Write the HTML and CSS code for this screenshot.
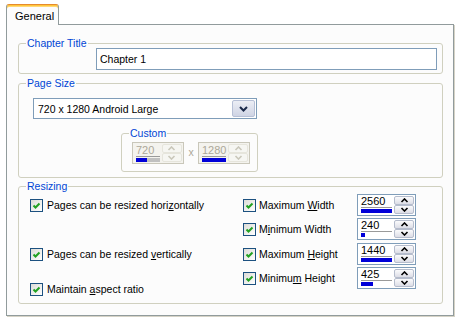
FILE: index.html
```html
<!DOCTYPE html>
<html>
<head>
<meta charset="utf-8">
<link rel="stylesheet" href="styles.css">
</head>
<body>
<div class="tabstrip"><div class="tab">General</div></div>
<div class="panel">
  <div class="group g-title">
    <div class="legend">Chapter Title</div>
    <div class="textbox">Chapter 1</div>
  </div>

  <div class="group g-size">
    <div class="legend">Page Size</div>
    <div class="combo">
      <span class="combo-text">720 x 1280 Android Large</span>
      <span class="combo-btn"><svg width="9" height="6" viewBox="0 0 9 6"><polyline points="1,1 4.5,4.5 8,1" fill="none" stroke="#1b2a4a" stroke-width="2"/></svg></span>
    </div>
    <div class="group g-custom">
      <div class="legend">Custom</div>
      <div class="spin small disabled">
        <div class="spin-edit"><span class="spin-num">720</span><span class="spin-bar"><span class="fill" style="width:46%"></span></span></div>
        <div class="spin-btns">
          <span class="sb"><svg width="9" height="5" viewBox="0 0 9 5"><polyline points="1.5,4 4.5,1 7.5,4" fill="none" stroke="currentColor" stroke-width="1.6"/></svg></span>
          <span class="sb"><svg width="9" height="5" viewBox="0 0 9 5"><polyline points="1.5,1 4.5,4 7.5,1" fill="none" stroke="currentColor" stroke-width="1.6"/></svg></span>
        </div>
      </div>
      <span class="times">x</span>
      <div class="spin small disabled">
        <div class="spin-edit"><span class="spin-num">1280</span><span class="spin-bar"><span class="fill" style="width:100%"></span></span></div>
        <div class="spin-btns">
          <span class="sb"><svg width="9" height="5" viewBox="0 0 9 5"><polyline points="1.5,4 4.5,1 7.5,4" fill="none" stroke="currentColor" stroke-width="1.6"/></svg></span>
          <span class="sb"><svg width="9" height="5" viewBox="0 0 9 5"><polyline points="1.5,1 4.5,4 7.5,1" fill="none" stroke="currentColor" stroke-width="1.6"/></svg></span>
        </div>
      </div>
    </div>
  </div>

  <div class="group g-resize">
    <div class="legend">Resizing</div>
    <div class="col-left">
      <label class="check l1"><span class="box"><svg width="11" height="11" viewBox="0 0 11 11"><polyline points="2.5,5.5 4.5,7.5 8.5,3.5" fill="none" stroke="#21a121" stroke-width="2"/></svg></span><span class="lbl">Pages can be resized hori<u>z</u>ontally</span></label>
      <label class="check l2"><span class="box"><svg width="11" height="11" viewBox="0 0 11 11"><polyline points="2.5,5.5 4.5,7.5 8.5,3.5" fill="none" stroke="#21a121" stroke-width="2"/></svg></span><span class="lbl">Pages can be resized <u>v</u>ertically</span></label>
      <label class="check l3"><span class="box"><svg width="11" height="11" viewBox="0 0 11 11"><polyline points="2.5,5.5 4.5,7.5 8.5,3.5" fill="none" stroke="#21a121" stroke-width="2"/></svg></span><span class="lbl">Maintain <u>a</u>spect ratio</span></label>
    </div>
    <div class="col-right">
      <div class="row">
        <label class="check wide"><span class="box"><svg width="11" height="11" viewBox="0 0 11 11"><polyline points="2.5,5.5 4.5,7.5 8.5,3.5" fill="none" stroke="#21a121" stroke-width="2"/></svg></span><span class="lbl">Maximum <u>W</u>idth</span></label>
        <div class="spin">
          <div class="spin-edit"><span class="spin-num">2560</span><span class="spin-bar"><span class="fill" style="width:100%"></span></span></div>
          <div class="spin-btns">
            <span class="sb"><svg width="9" height="5" viewBox="0 0 9 5"><polyline points="1.5,4 4.5,1 7.5,4" fill="none" stroke="currentColor" stroke-width="1.6"/></svg></span>
            <span class="sb"><svg width="9" height="5" viewBox="0 0 9 5"><polyline points="1.5,1 4.5,4 7.5,1" fill="none" stroke="currentColor" stroke-width="1.6"/></svg></span>
          </div>
        </div>
      </div>
      <div class="row">
        <label class="check wide"><span class="box"><svg width="11" height="11" viewBox="0 0 11 11"><polyline points="2.5,5.5 4.5,7.5 8.5,3.5" fill="none" stroke="#21a121" stroke-width="2"/></svg></span><span class="lbl">M<u>i</u>nimum Width</span></label>
        <div class="spin">
          <div class="spin-edit"><span class="spin-num">240</span><span class="spin-bar"><span class="fill" style="width:14%"></span></span></div>
          <div class="spin-btns">
            <span class="sb"><svg width="9" height="5" viewBox="0 0 9 5"><polyline points="1.5,4 4.5,1 7.5,4" fill="none" stroke="currentColor" stroke-width="1.6"/></svg></span>
            <span class="sb"><svg width="9" height="5" viewBox="0 0 9 5"><polyline points="1.5,1 4.5,4 7.5,1" fill="none" stroke="currentColor" stroke-width="1.6"/></svg></span>
          </div>
        </div>
      </div>
      <div class="row r3">
        <label class="check wide"><span class="box"><svg width="11" height="11" viewBox="0 0 11 11"><polyline points="2.5,5.5 4.5,7.5 8.5,3.5" fill="none" stroke="#21a121" stroke-width="2"/></svg></span><span class="lbl">Maximum <u>H</u>eight</span></label>
        <div class="spin">
          <div class="spin-edit"><span class="spin-num">1440</span><span class="spin-bar"><span class="fill" style="width:100%"></span></span></div>
          <div class="spin-btns">
            <span class="sb"><svg width="9" height="5" viewBox="0 0 9 5"><polyline points="1.5,4 4.5,1 7.5,4" fill="none" stroke="currentColor" stroke-width="1.6"/></svg></span>
            <span class="sb"><svg width="9" height="5" viewBox="0 0 9 5"><polyline points="1.5,1 4.5,4 7.5,1" fill="none" stroke="currentColor" stroke-width="1.6"/></svg></span>
          </div>
        </div>
      </div>
      <div class="row r4">
        <label class="check wide"><span class="box"><svg width="11" height="11" viewBox="0 0 11 11"><polyline points="2.5,5.5 4.5,7.5 8.5,3.5" fill="none" stroke="#21a121" stroke-width="2"/></svg></span><span class="lbl">Minimu<u>m</u> Height</span></label>
        <div class="spin">
          <div class="spin-edit"><span class="spin-num">425</span><span class="spin-bar"><span class="fill" style="width:37%"></span></span></div>
          <div class="spin-btns">
            <span class="sb"><svg width="9" height="5" viewBox="0 0 9 5"><polyline points="1.5,4 4.5,1 7.5,4" fill="none" stroke="currentColor" stroke-width="1.6"/></svg></span>
            <span class="sb"><svg width="9" height="5" viewBox="0 0 9 5"><polyline points="1.5,1 4.5,4 7.5,1" fill="none" stroke="currentColor" stroke-width="1.6"/></svg></span>
          </div>
        </div>
      </div>
    </div>
  </div>
</div>
</body>
</html>
```

FILE: styles.css
```css
* { box-sizing: border-box; }
html, body {
  margin: 0;
  padding: 0;
  background: #ffffff;
}
body {
  width: 459px;
  height: 321px;
  overflow: hidden;
  font-family: "Liberation Sans", Arial, sans-serif;
  font-size: 10.5px;
  color: #000;
}

/* tab */
.tabstrip {
  height: 25px;
  padding: 4px 0 0 6px;
  display: flex;
}
.tab {
  position: relative;
  z-index: 1;
  width: 53px;
  height: 21px;
  background: #fcfcfc;
  border: 1px solid #919b9c;
  border-top: 1px solid #e68b2c;
  border-bottom: none;
  border-radius: 3px 3px 0 0;
  box-shadow: inset 0 1px 0 #ffc73c, inset 0 2px 0 #ffd878;
  padding: 2px 0 0 8px;
  display: flex;
  align-items: center;
  font-size: 11px;
}

/* panel */
.panel {
  margin: -1px 0 0 6px;
  width: 448px;
  height: 292px;
  border: 1px solid #919b9c;
  background: #fcfcfc;
  box-shadow: 1px 1px 0 #d6d3c6;
  padding: 18px 10px 0 11px;
}

/* group boxes */
.group {
  position: relative;
  border: 1px solid #d0d0bf;
  border-radius: 3px;
}
.legend {
  position: absolute;
  top: -7px;
  left: 7px;
  padding: 0 1px;
  line-height: 13px;
  background: #fcfcfc;
  color: #0046d5;
}

.g-title {
  height: 31px;
  padding: 4px 5px 0 77px;
}
.textbox {
  height: 22px;
  border: 1px solid #7f9db9;
  background: #fff;
  padding-left: 3px;
  line-height: 20px;
}

.g-size {
  margin-top: 9px;
  height: 95px;
  padding: 14px 0 0 14px;
}
.combo {
  width: 224px;
  height: 21px;
  border: 1px solid #7f9db9;
  background: #fff;
  display: flex;
  align-items: center;
  padding: 0 1px 0 4px;
}
.combo-text { flex: 1; }
.combo-btn {
  width: 23px;
  height: 17px;
  border: 1px solid #b7c0d6;
  border-radius: 2px;
  background: linear-gradient(#eceef5, #cfd4e4);
  display: flex;
  align-items: center;
  justify-content: center;
}

.g-custom {
  margin: 14px 0 0 88px;
  width: 137px;
  height: 39px;
  padding: 8px 0 0 10px;
  display: flex;
}
.times {
  width: 14px;
  text-align: center;
  line-height: 20px;
  color: #aca899;
}

/* spinners */
.spin {
  width: 59px;
  height: 22px;
  border: 1px solid #7f9db9;
  background: #fff;
  padding: 0 1px;
  display: flex;
}
.spin-edit {
  width: 35px;
  padding: 0 1px 0 2px;
  display: flex;
  flex-direction: column;
}
.spin-num {
  height: 12px;
  line-height: 12px;
  border-bottom: 1px solid #9a9a9a;
  box-sizing: content-box;
  font-size: 11px;
}
.spin-bar {
  margin-top: 1px;
  height: 4px;
  display: flex;
}
.fill {
  height: 100%;
  background: #0000d8;
}
.spin-btns {
  margin-left: 1px;
  width: 20px;
  padding: 1px 0;
  display: flex;
  flex-direction: column;
}
.sb {
  height: 9px;
  border: 1px solid #b5bccc;
  border-radius: 2px;
  background: linear-gradient(#fbfbfc, #dcdde6);
  color: #000;
  display: flex;
  align-items: center;
  justify-content: center;
}

.spin.small { width: 52px; }
.spin.small .spin-edit { width: 28px; }
.spin.small .spin-num { height: 13px; line-height: 14px; }
.spin.small .spin-btns { width: 21px; }
.spin.disabled {
  border-color: #c9c7ba;
  background: #f4f3ee;
}
.spin.disabled .spin-num { color: #aca899; }
.spin.disabled .spin-bar { background: #c0c0c0; }
.spin.disabled .sb {
  border-color: #e6e5dc;
  background: #f6f6f2;
  color: #c9c7ba;
}

/* resizing */
.g-resize {
  margin-top: 8px;
  height: 118px;
  padding: 7px 0 0 11px;
  display: flex;
}
.col-left {
  width: 213px;
  display: flex;
  flex-direction: column;
}
.col-right {
  display: flex;
  flex-direction: column;
  gap: 2px;
}
.row {
  display: flex;
  height: 22px;
}
.row.r3 { margin-top: 1px; }

.check {
  display: flex;
  align-items: center;
  height: 22px;
  white-space: nowrap;
}
.check.l2 { margin-top: 27px; }
.check.l3 { margin-top: 13px; }
.check.wide { width: 114px; }
.box {
  flex: none;
  width: 13px;
  height: 13px;
  border: 1px solid #1c5180;
  background: linear-gradient(135deg, #dcdcd7, #ffffff);
  margin-right: 4px;
  display: flex;
  align-items: center;
  justify-content: center;
}
.check.wide .box { margin-right: 3px; }
u { text-decoration: underline; text-underline-offset: 1px; }
```
